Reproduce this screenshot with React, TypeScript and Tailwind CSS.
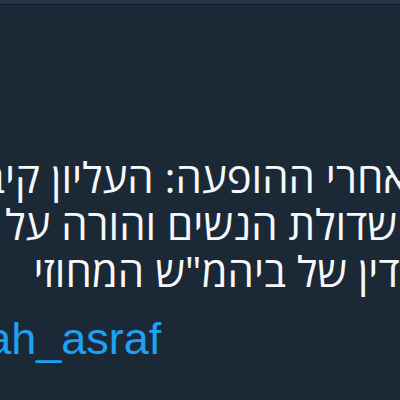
export default function App() {
  return (
    <div className="w-[400px] h-[400px] overflow-hidden bg-[#1b2836] flex flex-col">
      <div className="h-[5px] shrink-0 bg-[#243447] border-b border-[#121a23]" />
      <div
        dir="rtl"
        className="pt-[148px] text-[#f5f8fa] text-[42px] leading-[47px] font-['Open_Sans','Noto_Sans','DejaVu_Sans',sans-serif]"
      >
        <div className="whitespace-nowrap -mr-[8px]">אחרי ההופעה: העליון קיבל את</div>
        <div className="whitespace-nowrap mr-[3px]">שדולת הנשים והורה על</div>
        <div className="whitespace-nowrap -mr-[26px]">הדין של ביהמ"ש המחוזי</div>
      </div>
      <div
        dir="ltr"
        className="mt-[20px] -ml-[122px] whitespace-nowrap text-[#1da1f2] text-[45px] leading-[50px] font-['Liberation_Sans','Arial',sans-serif]"
      >
        @sarah_asraf
      </div>
    </div>
  );
}
